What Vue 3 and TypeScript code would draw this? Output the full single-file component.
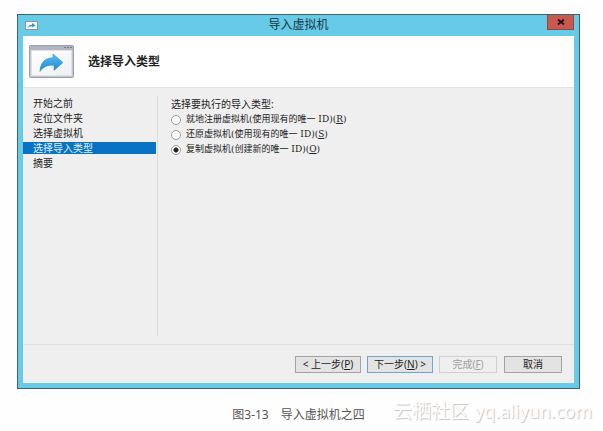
<script setup lang="ts">
import { ref } from 'vue'

interface ImportOption {
  id: string
  text: string
  key: string
}

const steps: string[] = ['开始之前', '定位文件夹', '选择虚拟机', '选择导入类型', '摘要']
const current = ref(3)

const options: ImportOption[] = [
  { id: 'register', text: '就地注册虚拟机(使用现有的唯一 ID)', key: 'R' },
  { id: 'restore', text: '还原虚拟机(使用现有的唯一 ID)', key: 'S' },
  { id: 'copy', text: '复制虚拟机(创建新的唯一 ID)', key: 'O' },
]
const selected = ref('copy')
</script>

<template>
  <main class="page">
    <section class="window">
      <header class="titlebar">
        <svg class="title-icon" viewBox="0 0 13 9" aria-hidden="true">
          <rect x="0.5" y="0.5" width="12" height="8" fill="#f4f8fb" stroke="#8795a6" />
          <path d="M2.5 7Q4 3.5 7 3.7V2L10.5 4.4L7.2 6.6V5.3Q4.5 5.1 2.5 7Z" fill="#2f93d6" />
        </svg>
        <h1 class="title">导入虚拟机</h1>
        <button class="close" type="button" aria-label="关闭">
          <svg viewBox="0 0 8 6" aria-hidden="true">
            <path d="M1 0.5L7 5.5M7 0.5L1 5.5" stroke="#251211" stroke-width="1.8" />
          </svg>
        </button>
      </header>

      <div class="client">
        <div class="banner">
          <svg class="banner-icon" viewBox="0 0 45 33" aria-hidden="true">
            <defs>
              <linearGradient id="arrow" x1="0" y1="0" x2="0" y2="1">
                <stop offset="0" stop-color="#58c0f2" />
                <stop offset="1" stop-color="#1c86d3" />
              </linearGradient>
              <linearGradient id="pane" x1="0" y1="0" x2="1" y2="1">
                <stop offset="0" stop-color="#ffffff" />
                <stop offset="1" stop-color="#eef0f3" />
              </linearGradient>
            </defs>
            <rect x="0.5" y="0.5" width="44" height="32" rx="1" fill="#c5c8d1" stroke="#9b9dab" />
            <rect x="1" y="1" width="43" height="4" fill="#b3b4c4" />
            <path d="M35 2.5h2M38 2.5h2M41 2.5h2" stroke="#77798c" />
            <rect x="2.5" y="5.5" width="40" height="25" fill="url(#pane)" stroke="#dfe1e7" />
            <path
              d="M11 26.5C11.5 17.5 16 12.8 24 12.8V9L34 17.5L25 25.5V20.3C19 19.6 14.5 21.5 11 26.5Z"
              fill="url(#arrow)"
              stroke="#368dc6"
              stroke-width="0.6"
            />
          </svg>
          <h2 class="heading">选择导入类型</h2>
        </div>

        <div class="content">
          <nav class="steps">
            <a
              v-for="(step, i) in steps"
              :key="step"
              href="#"
              class="step"
              :class="{ active: i === current }"
              @click.prevent="current = i"
            >{{ step }}</a>
          </nav>

          <fieldset class="choices">
            <legend class="prompt">选择要执行的导入类型:</legend>
            <label v-for="option in options" :key="option.id" class="choice" :for="option.id">
              <input :id="option.id" v-model="selected" class="radio" type="radio" name="import-type" :value="option.id" />
              <span>{{ option.text }}(<u>{{ option.key }}</u>)</span>
            </label>
          </fieldset>
        </div>

        <footer class="actions">
          <button class="btn wide" type="button">&lt; 上一步(<u>P</u>)</button>
          <button class="btn wide primary" type="button">下一步(<u>N</u>) &gt;</button>
          <button class="btn" type="button" disabled>完成(<u>F</u>)</button>
          <button class="btn cancel" type="button">取消</button>
        </footer>
      </div>
    </section>

    <p class="caption">图3-13　导入虚拟机之四</p>
    <p class="watermark"><span class="community">云栖社区</span><span>yq.aliyun.com</span></p>
  </main>
</template>

<style>
body {
  background: #fefefe;
}
</style>

<style scoped>
.page {
  position: relative;
  padding: 14px 23px 8px 17px;
  font-family: "Noto Sans", "Noto Sans CJK SC", sans-serif;
  color: #222;
}

.window {
  padding: 0 5px 5px;
  border: 1px solid #40616f;
  background: #67cbe8;
}

.titlebar {
  display: grid;
  grid-template-columns: 1fr auto 1fr;
  height: 21px;
}

.title-icon {
  width: 13px;
  height: 9px;
  margin: 6px 0 0 2px;
}

.title {
  margin: 0;
  font-size: 12px;
  line-height: 20px;
  font-weight: 400;
  color: #173642;
}

.close {
  display: flex;
  align-items: center;
  justify-content: center;
  justify-self: end;
  width: 27px;
  height: 15px;
  padding: 0;
  border: 1px solid #8e4a47;
  border-top: 0;
  background: #c7594f;
}

.close svg {
  width: 8px;
  height: 6px;
}

.client {
  background: #efefef;
}

.banner {
  display: flex;
  align-items: center;
  gap: 14px;
  height: 51px;
  padding-left: 6px;
  border-bottom: 1px solid #e3e3e3;
  background: #fff;
}

.banner-icon {
  width: 45px;
  height: 33px;
}

.heading {
  margin: 0;
  font-size: 12px;
  line-height: 18px;
  font-weight: 700;
}

.content {
  display: flex;
  padding: 8px 0;
}

.steps {
  display: flex;
  flex: 0 0 135px;
  flex-direction: column;
  gap: 3px;
  box-sizing: border-box;
  min-height: 240px;
  padding: 1px 1px 0 0;
  border-right: 1px solid #dcdcdc;
}

.step {
  padding-left: 10px;
  font-size: 10px;
  line-height: 12px;
  color: #222;
  text-decoration: none;
}

.step.active {
  background: #0873c4;
  color: #e4f2fc;
}

.choices {
  flex: 1;
  min-width: 0;
  margin: 0;
  padding: 0 0 0 13px;
  border: 0;
}

.prompt {
  padding: 2px 0;
  font-size: 10px;
  line-height: 12px;
}

.choice {
  display: flex;
  align-items: center;
  gap: 5px;
  width: fit-content;
  height: 15px;
  font-family: "DejaVu Serif", "Noto Sans CJK SC", serif;
  font-size: 9px;
  line-height: 17px;
  white-space: nowrap;
}

.radio {
  appearance: none;
  box-sizing: border-box;
  width: 10px;
  height: 10px;
  margin: 0;
  border: 1px solid #999;
  border-radius: 50%;
  background: #fff;
}

.radio:checked {
  background: radial-gradient(circle, #222 0 2px, #fff 3px);
}

.actions {
  display: flex;
  justify-content: flex-end;
  gap: 6px;
  padding: 11px 12px 10px;
  border-top: 1px solid #e2e2e2;
}

.btn {
  box-sizing: border-box;
  width: 58px;
  height: 17px;
  padding: 0;
  border: 1px solid #a3a3a3;
  background: #e3e3e3;
  font-family: inherit;
  font-size: 10px;
  line-height: 15px;
  color: #222;
  white-space: nowrap;
}

.wide {
  width: 66px;
}

.primary {
  border-color: #6fa5d2;
}

.btn:disabled {
  border-color: #cfcfcf;
  background: #efefef;
  color: #a0a0a0;
}

.cancel {
  margin-left: 1px;
}

.caption {
  margin: 17px 0 0;
  font-size: 12px;
  line-height: 17px;
  text-align: center;
  color: #555;
}

.watermark {
  position: absolute;
  right: 11px;
  bottom: 8px;
  display: flex;
  align-items: baseline;
  gap: 6px;
  margin: 0;
  font-size: 18px;
  line-height: 24px;
  color: #fdfdfd;
  text-shadow: 1px 1px 1px #c4c4c4;
}

.community {
  font-size: 19px;
}
</style>
